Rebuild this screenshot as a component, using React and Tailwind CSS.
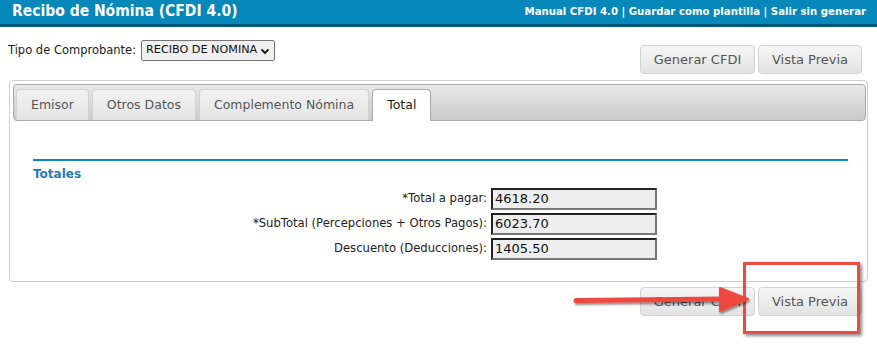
import React from 'react';

const font = { fontFamily: '"DejaVu Sans", Verdana, sans-serif' };
const condensed = { fontFamily: '"DejaVu Sans Condensed", "DejaVu Sans", sans-serif' };

const ActionButtons = () => (
  <div className="flex gap-[3px]">
    <button className="h-[29px] w-[115px] rounded-[4px] border border-[#d3d3d3] bg-gradient-to-b from-[#f6f6f6] to-[#e3e3e3] text-[13px] text-[#555]">
      Generar CFDI
    </button>
    <button className="h-[29px] w-[104px] rounded-[4px] border border-[#d3d3d3] bg-gradient-to-b from-[#f6f6f6] to-[#e3e3e3] text-[13px] text-[#555]">
      Vista Previa
    </button>
  </div>
);

const tabs = ['Emisor', 'Otros Datos', 'Complemento Nómina', 'Total'];

const rows = [
  ['*Total a pagar:', '4618.20'],
  ['*SubTotal (Percepciones + Otros Pagos):', '6023.70'],
  ['Descuento (Deducciones):', '1405.50'],
];

export default function App() {
  return (
    <div className="relative w-[877px] h-[345px] bg-white overflow-hidden" style={font}>
      {/* Header */}
      <div className="h-[27px] bg-[#0788bb] border-b-[3px] border-[#05577a] flex items-center justify-between pl-[12px] pr-[11px]" style={condensed}>
        <h1 className="text-[15.5px] font-bold text-white">Recibo de Nómina (CFDI 4.0)</h1>
        <div className="text-[11.3px] font-bold text-white">
          Manual CFDI 4.0 | Guardar como plantilla | Salir sin generar
        </div>
      </div>

      {/* Tipo + buttons */}
      <div className="flex justify-between items-start pl-[8px] pr-[15px] pt-[13px] h-[53px]">
        <div className="flex items-center gap-[5px]">
          <span className="text-[11.5px] text-[#222]">Tipo de Comprobante:</span>
          <div className="h-[21px] px-[4px] bg-[#efefef] border border-[#767676] rounded-[2px] flex items-center gap-[3px] text-[11.2px] text-[#111]">
            RECIBO DE NOMINA
            <svg width="10" height="10" viewBox="0 0 10 10">
              <path d="M1.5 3.5 L5 7 L8.5 3.5" stroke="#111" strokeWidth="1.8" fill="none" />
            </svg>
          </div>
        </div>
        <div className="pt-[5px]">
          <ActionButtons />
        </div>
      </div>

      {/* Panel */}
      <div className="mx-[9px] h-[202px] border border-[#cfcfcf] rounded-[4px] p-[3px] pr-[1px]">
        <div className="h-[37px] rounded-[4px] border border-[#aaa] bg-gradient-to-b from-[#e9e9e9] to-[#cacaca] flex items-end gap-[3px] pl-[2px]">
          {tabs.map((t) => (
            <div
              key={t}
              className={
                t === 'Total'
                  ? 'h-[32px] px-[14px] bg-white border border-b-0 border-[#aaa] rounded-t-[4px] flex items-center text-[12.5px] text-[#222] -mb-px'
                  : 'h-[31px] px-[14px] bg-gradient-to-b from-[#f2f2f2] to-[#e4e4e4] border border-b-0 border-[#d3d3d3] rounded-t-[4px] flex items-center text-[12.5px] text-[#555]'
              }
            >
              {t}
            </div>
          ))}
        </div>
        <div className="pl-[20px] pr-[18px] pt-[38px]">
          <div className="h-[2px] bg-[#0a87bb]" />
          <div className="text-[12px] font-bold text-[#2a7ab7] mt-[4px]">Totales</div>
          <div className="flex flex-col gap-[3px] mt-[5px]">
            {rows.map(([label, value]) => (
              <div key={label} className="flex items-center">
                <div className="w-[458px] text-right pr-[4px] text-[11.6px] text-[#222]">{label}</div>
                <div className="w-[166px] h-[22px] bg-[#eeeeee] border-2 border-t-[#222] border-l-[#222] border-b-[#777] border-r-[#777] flex items-center px-[2px] text-[13px] text-[#111]">
                  {value}
                </div>
              </div>
            ))}
          </div>
        </div>
      </div>

      {/* Bottom buttons */}
      <div className="flex justify-end pr-[15px] mt-[5px]">
        <ActionButtons />
      </div>

      {/* Annotation overlay */}
      <div className="absolute left-[743px] top-[262px] w-[117px] h-[72px] border-[3px] border-[#ee4a3f] shadow-[2px_2px_3px_rgba(0,0,0,0.45)]" />
      <svg className="absolute left-[568px] top-[285px]" width="190" height="32" viewBox="0 0 190 32">
        <defs>
          <filter id="sh" x="-10%" y="-50%" width="120%" height="200%">
            <feDropShadow dx="1" dy="2" stdDeviation="1.2" floodColor="#000" floodOpacity="0.45" />
          </filter>
        </defs>
        <g filter="url(#sh)">
          <path d="M8 13 L156 11.5 L156 16.5 L8 18 Z" fill="#ee4a3f" />
          <circle cx="8" cy="15.5" r="2.5" fill="#ee4a3f" />
          <path d="M152 3 L180 14 L152 26 Z" fill="#ee4a3f" strokeLinejoin="round" stroke="#ee4a3f" strokeWidth="2" />
        </g>
      </svg>
    </div>
  );
}
